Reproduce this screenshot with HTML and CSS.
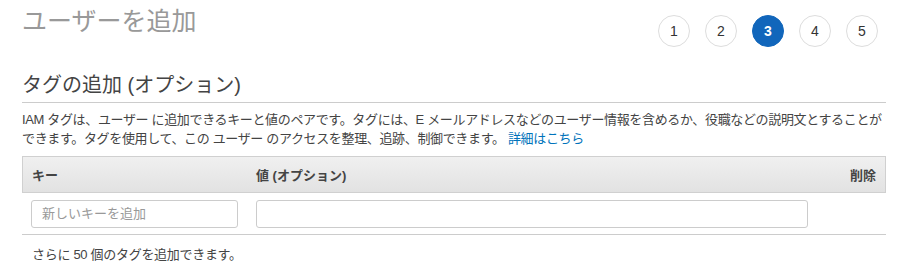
FILE: index.html
```html
<!DOCTYPE html>
<html lang="ja">
<head>
<meta charset="utf-8">
<link rel="stylesheet" href="styles.css">
</head>
<body>
<div class="page">
  <div class="top">
    <h1 class="title">ユーザーを追加</h1>
    <ol class="steps">
      <li class="step">1</li>
      <li class="step">2</li>
      <li class="step active">3</li>
      <li class="step">4</li>
      <li class="step">5</li>
    </ol>
  </div>
  <h2 class="section">タグの追加 (オプション)</h2>
  <p class="desc">IAM タグは、ユーザー に追加できるキーと値のペアです。タグには、E メールアドレスなどのユーザー情報を含めるか、役職などの説明文とすることができます。タグを使用して、この ユーザー のアクセスを整理、追跡、制御できます。 <a class="link" href="#">詳細はこちら</a></p>
  <div class="table">
    <div class="thead">
      <div class="th th-key">キー</div>
      <div class="th th-val">値 (オプション)</div>
      <div class="th th-del">削除</div>
    </div>
    <div class="row">
      <div class="cell-key"><input class="input input-key" type="text" placeholder="新しいキーを追加"></div>
      <div class="cell-val"><input class="input" type="text"></div>
      <div class="cell-del"></div>
    </div>
  </div>
  <p class="note">さらに 50 個のタグを追加できます。</p>
</div>
</body>
</html>
```
FILE: styles.css
```css
* { box-sizing: border-box; }
html, body { margin: 0; padding: 0; background: #fff; }
body {
  font-family: "Liberation Sans", "Noto Sans CJK JP", Arial, sans-serif;
  color: #444;
  font-size: 13px;
}
.page { padding: 0 16px 0 22px; }
.top {
  display: flex;
  justify-content: space-between;
  align-items: flex-start;
  height: 62px;
}
.title {
  margin: 6px 0 0;
  font-size: 25px;
  font-weight: 400;
  color: #999;
  line-height: 30px;
}
.steps {
  list-style: none;
  margin: 15px 8px 0 0;
  padding: 0;
  display: flex;
  gap: 15px;
}
.step {
  width: 32px;
  height: 32px;
  border-radius: 50%;
  border: 1px solid #ddd;
  display: flex;
  align-items: center;
  justify-content: center;
  font-size: 14px;
  color: #333;
}
.step.active {
  background: #1166bb;
  border-color: #1166bb;
  color: #fff;
  font-weight: 700;
}
.section {
  margin: 8px 0 0;
  font-size: 20px;
  font-weight: 400;
  color: #444;
  line-height: 30px;
  padding-bottom: 2px;
  border-bottom: 1px solid #ccc;
}
.desc {
  margin: 7px 0 0;
  line-height: 19px;
  color: #444;
  letter-spacing: -0.35px;
}
.link { color: #0073bb; text-decoration: none; }
.table { margin-top: 8px; }
.thead {
  display: flex;
  align-items: center;
  height: 37px;
  background: linear-gradient(#f0f0f0, #e2e2e2);
  border: 1px solid #d0d0d0;
  font-weight: 700;
  color: #444;
}
.th-key { width: 233px; padding-left: 9px; }
.th-val { flex: 1; }
.th-del { padding-right: 9px; }
.row {
  display: flex;
  align-items: center;
  height: 42px;
  border-bottom: 1px solid #ccc;
}
.cell-key { width: 234px; padding-left: 9px; }
.cell-val { width: 552px; }
.cell-del { flex: 1; }
.input {
  display: block;
  width: 100%;
  height: 28px;
  border: 1px solid #ccc;
  border-radius: 3px;
  padding: 0 10px;
  font-family: inherit;
  font-size: 13px;
  color: #444;
  background: #fff;
}
.input-key { width: 207px; }
.input::placeholder { color: #999; }
.note {
  margin: 10px 0 0 10px;
  line-height: 19px;
  color: #444;
  letter-spacing: -0.3px;
}
```
